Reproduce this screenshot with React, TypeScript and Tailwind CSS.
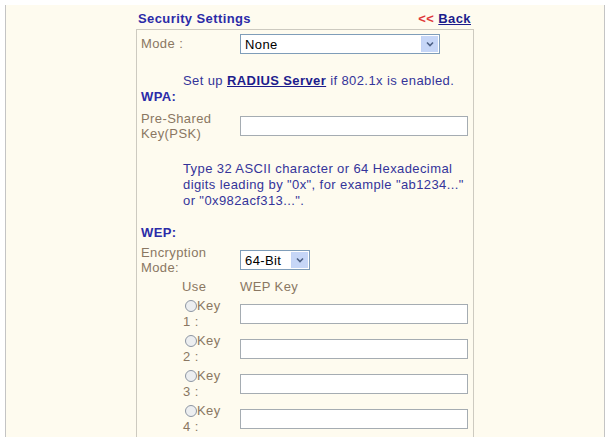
import React from 'react';

const font = { fontFamily: '"Liberation Sans", Arial, sans-serif' };

function DropArrow() {
  return (
    <span className="flex h-full w-[17px] items-center justify-center border-l border-[#c3d3f5] bg-[#c6d6f7]">
      <svg width="8" height="6" viewBox="0 0 8 6">
        <path d="M1 1.5 L4 4.5 L7 1.5" fill="none" stroke="#4d6185" strokeWidth="1.6" />
      </svg>
    </span>
  );
}

function Select({ value, width }: { value: string; width: string }) {
  return (
    <div className={`flex h-[20px] ${width} items-stretch border border-[#7f9db9] bg-white`}>
      <span className="flex flex-1 items-center pl-[4px] text-[13px] leading-none text-black">{value}</span>
      <div className="p-[1px]">
        <DropArrow />
      </div>
    </div>
  );
}

function TextBox() {
  return <div className="h-[20px] w-[228px] border border-[#a5acb2] bg-white" />;
}

function Radio() {
  return (
    <span className="ml-[2px] inline-block h-[12px] w-[12px] rounded-full border border-[#8d96a3] bg-[#eceef0]" />
  );
}

export default function App() {
  const label = 'text-[#8a7762]';
  const blue = 'text-[#34349a]';
  return (
    <div className="min-h-[444px] bg-white text-[13px] tracking-[0.4px]" style={font}>
      <div className="ml-[5px] mt-[5px] h-[432px] w-[600px] overflow-hidden border-x border-[#c4c4c4] bg-[#fefbef]">
        <div className="ml-[130px] w-[338px]">
          {/* header */}
          <div className="flex h-[24px] items-start justify-between pt-[6px] pl-[2px] pr-[3px] leading-[16px]">
            <span className="font-bold text-[#2b2ba8]">Security Settings</span>
            <span className="font-bold">
              <span className="text-[#e0383a]">&lt;&lt;</span>{' '}
              <span className="text-[#1c1c8c] underline">Back</span>
            </span>
          </div>

          {/* form box */}
          <div className="h-[420px] border border-b-0 border-[#cdcac0] pl-[4px]">
            <div className="mt-[4px] flex h-[20px] items-center">
              <span className={`w-[99px] ${label}`}>Mode :</span>
              <Select value="None" width="w-[200px]" />
            </div>

            <div className={`mt-[19px] pl-[42px] leading-[16px] ${blue}`}>
              Set up{' '}
              <span className="font-bold text-[#1c1c8c] underline">RADIUS Server</span> if 802.1x is enabled.
            </div>

            <div className="font-bold leading-[16px] text-[#2b2ba8]">WPA:</div>

            <div className="mt-[6px] flex items-center">
              <span className={`w-[99px] leading-[15px] ${label}`}>
                Pre-Shared
                <br />
                Key(PSK)
              </span>
              <TextBox />
            </div>

            <div className={`mt-[20px] pl-[42px] pr-[2px] leading-[16px] ${blue}`}>
              Type 32 ASCII character or 64 Hexadecimal digits leading by "0x", for example "ab1234..." or
              "0x982acf313...".
            </div>

            <div className="mt-[16px] font-bold leading-[16px] text-[#2b2ba8]">WEP:</div>

            <div className="mt-[4px] flex items-center">
              <span className={`w-[99px] leading-[15px] ${label}`}>
                Encryption
                <br />
                Mode:
              </span>
              <Select value="64-Bit" width="w-[70px]" />
            </div>

            <div className={`mt-[4px] flex leading-[16px] ${label}`}>
              <span className="ml-[41px] w-[58px]">Use</span>
              <span>WEP Key</span>
            </div>

            <div className="mt-[3px] flex flex-col gap-[3px]">
              {[1, 2, 3, 4].map((n) => (
                <div key={n} className="flex items-center">
                  <div className={`ml-[42px] w-[57px] leading-[16px] ${label}`}>
                    <div className="flex items-center">
                      <Radio />
                      Key
                    </div>
                    <div>{n} :</div>
                  </div>
                  <TextBox />
                </div>
              ))}
            </div>
          </div>
        </div>
      </div>
    </div>
  );
}
